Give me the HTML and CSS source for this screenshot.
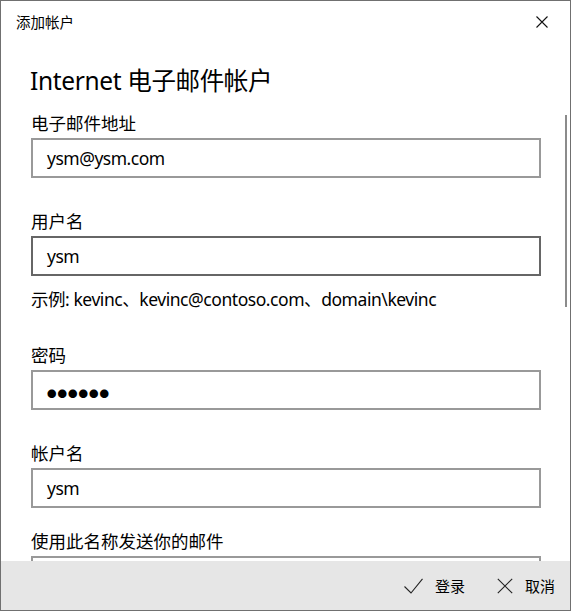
FILE: index.html
```html
<!DOCTYPE html>
<html lang="zh-CN">
<head>
<meta charset="utf-8">
<title>添加帐户</title>
<link rel="stylesheet" href="styles.css">
</head>
<body>
<div class="window">
  <header class="titlebar">
    <span class="title">添加帐户</span>
    <button class="close" aria-label="关闭">
      <svg width="12" height="12" viewBox="0 0 12 12"><path d="M0.5 0.5 L11.5 11.5 M11.5 0.5 L0.5 11.5" stroke="#111" stroke-width="1.1" fill="none"/></svg>
    </button>
  </header>
  <main class="content">
    <h1 class="heading">Internet 电子邮件帐户</h1>
    <div class="field first">
      <div class="label">电子邮件地址</div>
      <div class="input">ysm@ysm.com</div>
    </div>
    <div class="field">
      <div class="label">用户名</div>
      <div class="input hover">ysm</div>
    </div>
    <div class="hint">示例: kevinc、kevinc@contoso.com、domain\kevinc</div>
    <div class="field">
      <div class="label">密码</div>
      <div class="input"><span class="dots">●●●●●●</span></div>
    </div>
    <div class="field">
      <div class="label">帐户名</div>
      <div class="input">ysm</div>
    </div>
    <div class="field compact">
      <div class="label">使用此名称发送你的邮件</div>
      <div class="input"></div>
    </div>
  </main>
  <div class="scrollbar"></div>
  <footer class="footer">
    <button class="btn">
      <svg width="19" height="16" viewBox="0 0 19 16"><polyline points="0.5,8.5 7,15 18.5,0.8" stroke="#222" stroke-width="1.1" fill="none"/></svg>
      <span>登录</span>
    </button>
    <button class="btn">
      <svg width="16" height="16" viewBox="0 0 16 16"><path d="M0.8 0.8 L15.2 15.2 M15.2 0.8 L0.8 15.2" stroke="#222" stroke-width="1.1" fill="none"/></svg>
      <span>取消</span>
    </button>
  </footer>
</div>
</body>
</html>
```

FILE: styles.css
```css
html, body {
  margin: 0;
  padding: 0;
  background: #ffffff;
}

body {
  font-family: "Noto Sans", "Noto Sans CJK SC", sans-serif;
  color: #000;
}

.window {
  position: relative;
  width: 571px;
  height: 611px;
  box-sizing: border-box;
  border: 1px solid #707070;
  display: flex;
  flex-direction: column;
  overflow: hidden;
  background: #fff;
}

.titlebar {
  height: 41px;
  flex: 0 0 auto;
  display: flex;
  align-items: center;
  justify-content: space-between;
  padding-left: 15px;
}

.title {
  font-size: 14.5px;
  line-height: 20px;
}

.close {
  width: 56px;
  height: 41px;
  border: 0;
  padding: 0;
  margin: 0;
  background: transparent;
  display: flex;
  align-items: center;
  justify-content: center;
}

.content {
  flex: 1 1 auto;
  overflow: hidden;
  padding: 0 30px;
}

.heading {
  margin: 22px 0 12px -1px;
  height: 34px;
  font-size: 24.5px;
  line-height: 34px;
  font-weight: normal;
  letter-spacing: -0.35px;
}

.field {
  margin-top: 30px;
}

.field.first {
  margin-top: 0;
}

.field.compact {
  margin-top: 20px;
}

.label {
  height: 26px;
  line-height: 26px;
  font-size: 17.5px;
  margin-bottom: 2px;
  white-space: nowrap;
}

.input {
  width: 510px;
  height: 40px;
  box-sizing: border-box;
  border: 2px solid #999999;
  padding-left: 14px;
  line-height: 36px;
  font-size: 17.5px;
  letter-spacing: -0.5px;
  background: #fff;
}

.input.hover {
  border-color: #666666;
}

.dots {
  font-size: 9.5px;
  letter-spacing: 1px;
}

.hint {
  margin-top: 10px;
  height: 26px;
  line-height: 26px;
  font-size: 17.5px;
  letter-spacing: -0.45px;
  white-space: nowrap;
}

.scrollbar {
  position: absolute;
  left: 564px;
  top: 114px;
  width: 2px;
  height: 192px;
  background: #8b8b8b;
}

.footer {
  height: 49px;
  flex: 0 0 auto;
  background: #e6e6e6;
  display: flex;
  justify-content: flex-end;
  align-items: center;
  gap: 32px;
  padding-right: 15px;
}

.btn {
  border: 0;
  padding: 0;
  margin: 0;
  background: transparent;
  display: flex;
  align-items: center;
  gap: 12px;
  font-family: inherit;
  font-size: 15px;
  color: #000;
}
```
